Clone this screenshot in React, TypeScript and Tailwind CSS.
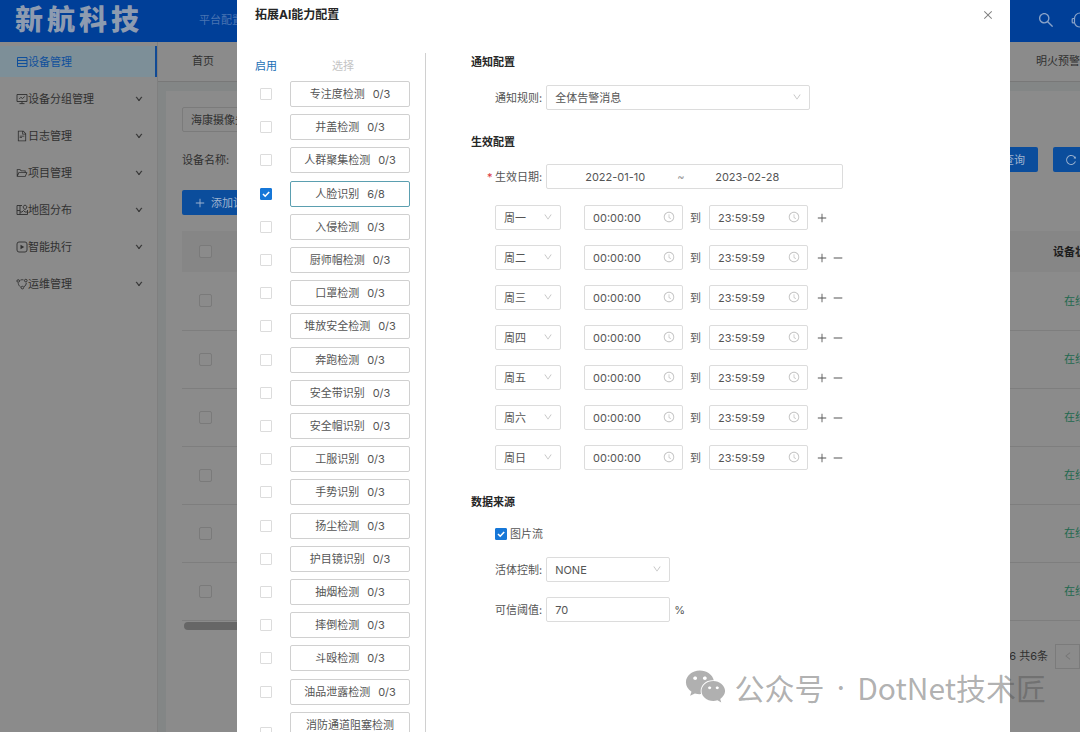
import React from "react";
import {
  AiOutlineClockCircle,
  AiOutlineClose,
  AiOutlineDown,
  AiOutlineFileText,
  AiOutlineFolderOpen,
  AiOutlineLeft,
  AiOutlineMinus,
  AiOutlinePlus,
  AiOutlineReload,
  AiOutlineSearch,
} from "react-icons/ai";
import { FaWeixin } from "react-icons/fa";

const DeviceIcon = () => (
  <svg viewBox="0 0 12 12" className="size-3" fill="none" stroke="currentColor" strokeWidth="1" aria-hidden="true">
    <path d="M1.5 1.5H11v9H1.5zM1.5 4.5H11M1.5 7.5H11" />
  </svg>
);

const ScreenIcon = () => (
  <svg viewBox="0 0 12 12" className="size-3" fill="none" stroke="currentColor" strokeWidth="0.9" aria-hidden="true">
    <path d="M1 1.5h10v7H1zM6 8.5v2M3.5 10.6h5M3.2 6l1.7-1.7 1.6 1.2 2.2-2" />
  </svg>
);

const MapIcon = () => (
  <svg viewBox="0 0 12 12" className="size-3" fill="none" stroke="currentColor" strokeWidth="0.9" aria-hidden="true">
    <path d="M6 1.5H1v9h10.5V6M4 1.5v9M1 6.5h3M4 8h2l1.5-1.5L9 8h2.5" />
    <path d="M9 5.8 7.5 4a1.8 1.8 0 1 1 3 0z" />
  </svg>
);

const PlayIcon = () => (
  <svg viewBox="0 0 12 12" className="size-3" fill="none" stroke="currentColor" strokeWidth="0.9" aria-hidden="true">
    <rect x="1" y="1" width="10" height="10" rx="2" />
    <path d="M4.5 3.8v4.4L8.2 6z" fill="currentColor" stroke="none" />
  </svg>
);

const NodesIcon = () => (
  <svg viewBox="0 0 12 12" className="size-3" fill="none" stroke="currentColor" strokeWidth="0.9" aria-hidden="true">
    <circle cx="2.2" cy="3" r="1.3" />
    <circle cx="9.8" cy="2.6" r="1.3" />
    <circle cx="6.4" cy="9.6" r="1.3" />
    <path d="M4.4 2.2c1-.6 2-.6 3.1-.3M2.2 5.2c.2 1.6 1.2 3 2.4 3.8M10.3 4.8c0 1.6-1 3.2-2.3 4" />
  </svg>
);

const HeadsetIcon = () => (
  <svg viewBox="0 0 18 18" className="size-[18px]" fill="none" stroke="currentColor" strokeWidth="1.2" aria-hidden="true">
    <path d="M3.5 7.5a5.5 5.5 0 0 1 11 0M3.5 7.5H2.2a1 1 0 0 0-1 1v2.4a1 1 0 0 0 1 1h1.3zM14.5 7.5h1.3a1 1 0 0 1 1 1v2.4a1 1 0 0 1-1 1h-1.3zM3.5 11.9c.8 2.6 3 4.1 5.5 4.1 2.5 0 4.700-1.500 5.500-4.100" />
  </svg>
);

const navItems = [
  { label: "设备管理", icon: <DeviceIcon />, active: true },
  { label: "设备分组管理", icon: <ScreenIcon /> },
  { label: "日志管理", icon: <AiOutlineFileText className="size-3" /> },
  { label: "项目管理", icon: <AiOutlineFolderOpen className="size-3" /> },
  { label: "地图分布", icon: <MapIcon /> },
  { label: "智能执行", icon: <PlayIcon /> },
  { label: "运维管理", icon: <NodesIcon /> },
];

const abilities = [
  "专注度检测",
  "井盖检测",
  "人群聚集检测",
  "人脸识别",
  "入侵检测",
  "厨师帽检测",
  "口罩检测",
  "堆放安全检测",
  "奔跑检测",
  "安全带识别",
  "安全帽识别",
  "工服识别",
  "手势识别",
  "扬尘检测",
  "护目镜识别",
  "抽烟检测",
  "摔倒检测",
  "斗殴检测",
  "油品泄露检测",
  "消防通道阻塞检测",
];

const days = ["周一", "周二", "周三", "周四", "周五", "周六", "周日"];

function Check({ label, checked = false }: { label: string; checked?: boolean }) {
  return (
    <span className="relative flex size-3 shrink-0">
      <input
        type="checkbox"
        aria-label={label}
        defaultChecked={checked}
        className="peer size-3 appearance-none rounded-[1px] border border-[#dcdcdc] bg-white checked:border-[#1677d8] checked:bg-[#1677d8]"
      />
      <svg
        viewBox="0 0 12 12"
        className="pointer-events-none absolute inset-0 hidden size-3 peer-checked:block"
        fill="none"
        stroke="white"
        strokeWidth="1.6"
        aria-hidden="true"
      >
        <path d="M3 6l2.200 2.200L9.200 4" />
      </svg>
    </span>
  );
}

function Select({ id, label, value, className }: { id?: string; label?: string; value: string; className: string }) {
  return (
    <div className={`relative shrink-0 ${className}`}>
      <select
        id={id}
        aria-label={label}
        className="h-[25px] w-full appearance-none rounded-xs border border-[#dcdcdc] bg-white pl-2 pr-5"
      >
        <option>{value}</option>
      </select>
      <AiOutlineDown className="pointer-events-none absolute right-2 top-[7px] size-[10px] text-[#bfbfbf]" />
    </div>
  );
}

function Time({ label, value }: { label: string; value: string }) {
  return (
    <div className="relative w-[99px] shrink-0">
      <input
        type="text"
        aria-label={label}
        defaultValue={value}
        className="h-[25px] w-full rounded-xs border border-[#dcdcdc] bg-white pl-2 pr-6"
      />
      <AiOutlineClockCircle className="pointer-events-none absolute right-2 top-[6px] size-3 text-[#c4c4c4]" />
    </div>
  );
}

function Sidebar() {
  return (
    <nav className="w-[158px] shrink-0 border-r border-[#7f7f7f] bg-[#8b8b8b] pt-1">
      <ul className="flex flex-col gap-[6px]">
        {navItems.map((item) => (
          <li key={item.label}>
            <a
              href="#"
              className={`flex h-[31px] items-center border-r-2 pl-4 pr-3 ${
                item.active ? "border-[#104a95] bg-[#7d8f98] text-[#0f4f9c]" : "border-transparent text-[#303030]"
              }`}
            >
              {item.icon}
              <span className="flex-1">{item.label}</span>
              {!item.active && <AiOutlineDown className="size-2 stroke-[60px]" />}
            </a>
          </li>
        ))}
      </ul>
    </nav>
  );
}

function DimCheck({ label }: { label: string }) {
  return (
    <input
      type="checkbox"
      aria-label={label}
      className="block size-[13px] appearance-none rounded-xs border border-[#7a7a7a] bg-[#8b8b8b]"
    />
  );
}

function DeviceTable() {
  return (
    <table className="mt-4 w-full table-fixed border-collapse">
      <thead>
        <tr className="h-[41px] bg-[#868686]">
          <th className="pl-[17px] text-left">
            <DimCheck label="全选" />
          </th>
          <th className="w-[27px] overflow-hidden whitespace-nowrap text-left font-bold text-[#1c1c1c]">设备状态</th>
        </tr>
      </thead>
      <tbody>
        {[1, 2, 3, 4, 5, 6].map((n) => (
          <tr key={n} className="h-[58px] border-b border-[#7e7e7e]">
            <td className="pl-[17px]">
              <DimCheck label={`选择设备 ${n}`} />
            </td>
            <td className="overflow-hidden whitespace-nowrap pl-[11px] text-[#22694f]">在线</td>
          </tr>
        ))}
      </tbody>
    </table>
  );
}

function Page() {
  return (
    <div className="flex h-full flex-col text-[#303030]">
      <header className="flex h-[42px] shrink-0 items-center bg-[#003f98] pb-[3px] pl-[15px]">
        <h1 className="flex w-[184px] shrink-0 gap-1 text-[28px] font-black leading-none text-[#8d9bb0]">
          {["新", "航", "科", "技"].map((char) => (
            <span key={char}>{char}</span>
          ))}
        </h1>
        <a href="#" className="flex-1 text-[#4a74b2]">
          平台配置
        </a>
        <div className="flex w-[43px] shrink-0 gap-4 overflow-hidden text-[#8aa3c8]">
          <button aria-label="搜索" className="shrink-0">
            <AiOutlineSearch className="size-[18px]" />
          </button>
          <button aria-label="客服" className="shrink-0">
            <HeadsetIcon />
          </button>
        </div>
      </header>
      <div className="flex min-h-0 flex-1">
        <Sidebar />
        <main className="flex min-w-0 flex-1 flex-col bg-[#838686]">
          <div className="flex h-10 shrink-0 items-center border-b border-[#787878] bg-[#8b8b8b] pb-[2px] pl-[34px]">
            <a href="#" className="flex-1">
              首页
            </a>
            <a href="#" className="w-11 shrink-0 whitespace-nowrap">
              明火预警
            </a>
          </div>
          <div className="ml-2 mt-[9px] flex-1 bg-[#8b8b8b] pl-4 pt-4">
            <button className="flex h-[25px] w-[90px] items-center rounded-xs border border-[#7b7b7b] px-2">
              海康摄像头
            </button>
            <div className="mt-[15px] flex items-center justify-between">
              <span>设备名称:</span>
              <div className="flex gap-[15px] text-[#9fb4d0]">
                <button className="h-[25px] w-14 rounded-xs bg-[#0b4d9c] pl-2">查询</button>
                <button aria-label="重置" className="h-[25px] w-[27px] rounded-l-xs bg-[#0b4d9c] pl-3">
                  <AiOutlineReload className="size-3" />
                </button>
              </div>
            </div>
            <button className="mt-[18px] flex h-[25px] w-[90px] items-center gap-[5px] rounded-xs bg-[#0b4d9c] pl-3 text-[#9fb4d0]">
              <AiOutlinePlus className="size-3" />
              添加设备
            </button>
            <DeviceTable />
            <div className="ml-[2px] mt-px h-2 w-1/2 rounded-full bg-[#666666]" />
            <div className="mt-[14px] flex items-center justify-end gap-[7px]">
              <span>6 共6条</span>
              <button
                aria-label="上一页"
                className="flex h-[25px] w-[25px] items-center justify-center border border-[#7b7b7b] text-[#757575]"
              >
                <AiOutlineLeft className="size-[10px]" />
              </button>
            </div>
          </div>
        </main>
      </div>
    </div>
  );
}

function AbilityList() {
  return (
    <section className="w-[189px] shrink-0 self-stretch border-r border-[#d0d0d0] pl-[18px] pt-1">
      <div className="flex h-[18px] items-center">
        <span className="w-[35px] text-[#1b6fb5]">启用</span>
        <span className="w-[106px] text-center text-[#c4c4c4]">选择</span>
      </div>
      <ul className="mt-[6px] flex min-h-[673px] flex-col justify-between">
        {abilities.map((name) => {
          const on = name === "人脸识别";
          return (
            <li key={name} className="flex items-center gap-[18px] pl-[5px]">
              <Check label={`启用${name}`} checked={on} />
              <button
                className={`flex min-h-[26px] w-[120px] flex-wrap items-center justify-center gap-x-2 rounded-xs border px-2 py-1 leading-4 ${
                  on ? "border-[#5b9fb0]" : "border-[#d0d0d0]"
                }`}
              >
                <span>{name}</span>
                <span>{on ? "6/8" : "0/3"}</span>
              </button>
            </li>
          );
        })}
      </ul>
    </section>
  );
}

function ConfigForm() {
  return (
    <form className="min-w-0 flex-1 pl-[45px] pt-px">
      <h3 className="font-bold leading-4 text-[#262626]">通知配置</h3>
      <div className="mt-[15px] flex items-center gap-1 pl-6">
        <label htmlFor="rule">通知规则:</label>
        <Select id="rule" value="全体告警消息" className="w-[264px]" />
      </div>

      <h3 className="mt-6 font-bold leading-4 text-[#262626]">生效配置</h3>
      <div className="mt-[14px] flex items-center gap-1 pl-4">
        <label htmlFor="start" className="flex">
          <span className="w-2 text-[#d9363e]">*</span>生效日期:
        </label>
        <div className="flex h-[25px] w-[297px] items-center rounded-xs border border-[#dcdcdc] pl-[38px]">
          <input id="start" type="text" defaultValue="2022-01-10" className="w-[92px]" />
          <span className="w-[38px] text-[#999999]">~</span>
          <input type="text" aria-label="结束日期" defaultValue="2023-02-28" className="w-[90px]" />
        </div>
      </div>
      <ul className="mt-4 flex flex-col gap-[15px] pl-6">
        {days.map((day, i) => (
          <li key={day} className="flex items-center">
            <Select label="星期" value={day} className="mr-[23px] w-[66px]" />
            <Time label={`${day}开始时间`} value="00:00:00" />
            <span className="pl-[7px] pr-2">到</span>
            <Time label={`${day}结束时间`} value="23:59:59" />
            <div className="flex gap-1 pl-2">
              <button type="button" aria-label="添加时段">
                <AiOutlinePlus className="size-3" />
              </button>
              {i > 0 && (
                <button type="button" aria-label="删除时段">
                  <AiOutlineMinus className="size-3" />
                </button>
              )}
            </div>
          </li>
        ))}
      </ul>

      <h3 className="mt-6 font-bold leading-4 text-[#262626]">数据来源</h3>
      <label className="mt-4 flex items-center gap-[3px] pl-6 leading-4">
        <Check label="图片流" checked />
        图片流
      </label>
      <div className="mt-[15px] flex items-center gap-1 pl-6">
        <label htmlFor="live">活体控制:</label>
        <Select id="live" value="NONE" className="w-[124px]" />
      </div>
      <div className="mt-[15px] flex items-center gap-1 pl-6">
        <label htmlFor="threshold">可信阈值:</label>
        <input
          id="threshold"
          type="text"
          defaultValue="70"
          className="h-[25px] w-[124px] rounded-xs border border-[#dcdcdc] px-2"
        />
        <span>%</span>
      </div>
    </form>
  );
}

export default function App() {
  return (
    <div className="relative h-screen overflow-hidden bg-[#8b8b8b] font-['Inter','Noto_Sans_CJK_SC',sans-serif] text-[11px] leading-4">
      <Page />
      <div
        role="dialog"
        aria-label="拓展AI能力配置"
        className="absolute inset-y-0 left-[237px] right-[70px] overflow-hidden bg-white text-[#555555]"
      >
        <div className="flex h-[30px] items-center justify-between pl-[18px] pr-4">
          <h2 className="text-xs font-bold text-[#262626]">拓展AI能力配置</h2>
          <button aria-label="关闭" className="text-[#808080]">
            <AiOutlineClose className="size-3" />
          </button>
        </div>
        <div className="mt-[23px] flex items-start">
          <AbilityList />
          <ConfigForm />
        </div>
      </div>
      <div className="pointer-events-none absolute bottom-[25px] right-[34px] flex items-center gap-2 font-['Noto_Sans_CJK_SC',sans-serif] text-[30px] leading-10 text-[#505050]/45">
        <FaWeixin className="size-[41px]" />
        <div className="flex gap-3">
          <span>公众号</span>
          <span className="font-['Inter',sans-serif]">·</span>
          <span>DotNet技术匠</span>
        </div>
      </div>
    </div>
  );
}
